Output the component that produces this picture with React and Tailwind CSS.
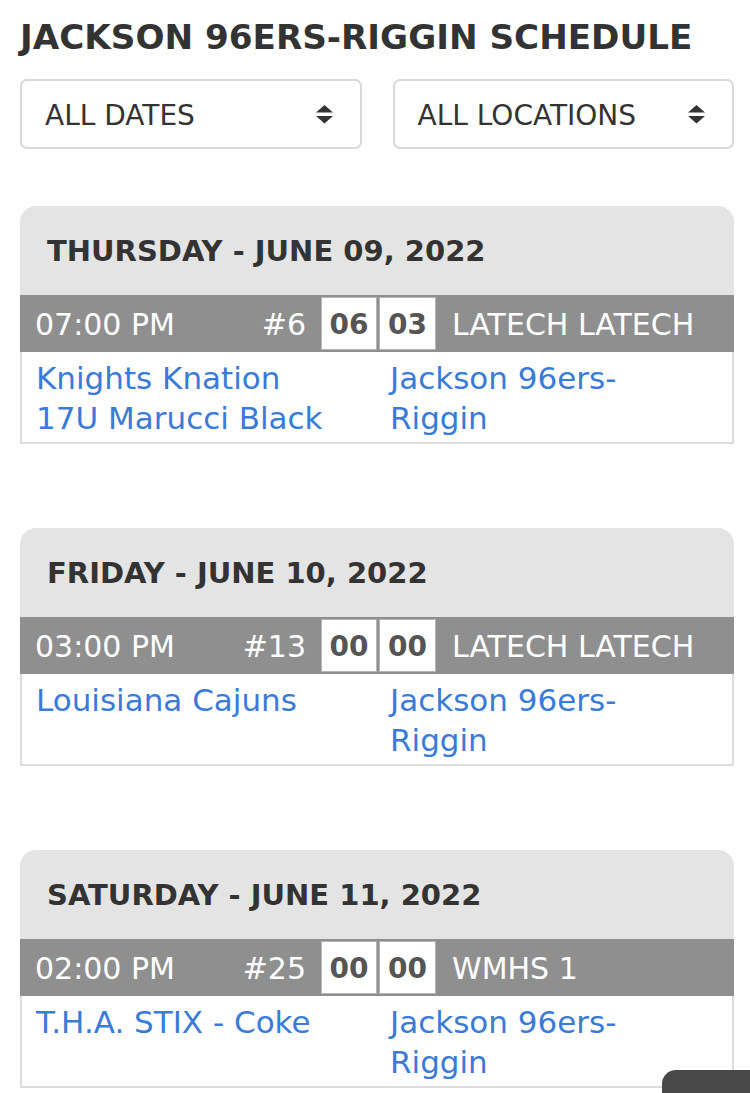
const games = [
  {
    date: 'THURSDAY - JUNE 09, 2022',
    time: '07:00 PM',
    num: '#6',
    home: '06',
    away: '03',
    location: 'LATECH LATECH',
    left: ['Knights Knation', '17U Marucci Black'],
    right: ['Jackson 96ers-', 'Riggin'],
  },
  {
    date: 'FRIDAY - JUNE 10, 2022',
    time: '03:00 PM',
    num: '#13',
    home: '00',
    away: '00',
    location: 'LATECH LATECH',
    left: ['Louisiana Cajuns'],
    right: ['Jackson 96ers-', 'Riggin'],
  },
  {
    date: 'SATURDAY - JUNE 11, 2022',
    time: '02:00 PM',
    num: '#25',
    home: '00',
    away: '00',
    location: 'WMHS 1',
    left: ['T.H.A. STIX - Coke'],
    right: ['Jackson 96ers-', 'Riggin'],
  },
];

const SortArrows = () => (
  <svg width="17" height="19" viewBox="0 0 17 19" className="shrink-0">
    <path d="M8.5 0 L17 7.5 L0 7.5 Z" fill="#333" />
    <path d="M0 11 L17 11 L8.5 18.5 Z" fill="#333" />
  </svg>
);

const Select = ({ label }) => (
  <div className="flex-1 h-[70px] border-2 border-[#d9d9d9] rounded-[7px] pl-[23px] pr-[27px] flex items-center justify-between">
    <span className="text-[28px] text-[#333] leading-none pt-[4px]">{label}</span>
    <SortArrows />
  </div>
);

const GameCard = ({ game }) => (
  <div>
    {/* date header */}
    <div className="h-[89px] bg-[#e4e4e4] rounded-t-[16px] pl-[27px] pt-[2px] flex items-center">
      <h2 className="text-[29px] font-bold text-[#333] leading-none">{game.date}</h2>
    </div>

    {/* time / score bar */}
    <div className="h-[57px] bg-[#8f8f8f] flex text-white text-[30px] leading-none">
      <div className="flex-1 pl-[15px] pt-[3px] flex items-center">{game.time}</div>
      <div className="pr-[15px] pt-[3px] flex items-center">{game.num}</div>
      <div className="w-[56px] my-[2px] pt-[2px] bg-white border border-[#b5b5b5] flex items-center justify-center text-[#555] font-bold text-[28px]">
        {game.home}
      </div>
      <div className="w-[2px]" />
      <div className="w-[57px] my-[2px] pt-[2px] bg-white border border-[#b5b5b5] flex items-center justify-center text-[#555] font-bold text-[28px]">
        {game.away}
      </div>
      <div className="w-[298px] pl-[16px] pt-[3px] flex items-center">{game.location}</div>
    </div>

    {/* teams */}
    <div className="h-[92px] border-x-2 border-b-2 border-[#dcdcdc] grid grid-cols-2 pt-[6px] text-[31px] leading-[40px] text-[#3a7bd8]">
      <div className="pl-[14px]">
        {game.left.map((l) => (
          <div key={l}>{l}</div>
        ))}
      </div>
      <div className="pl-[13px]">
        {game.right.map((l) => (
          <div key={l}>{l}</div>
        ))}
      </div>
    </div>
  </div>
);

export default function App() {
  return (
    <div className="min-h-screen bg-white font-['DejaVu_Sans',sans-serif]">
      <div className="pl-[20px] pr-[16px] pt-[15px]">
        <h1 className="text-[34.2px] font-bold text-[#333] leading-[44px]">JACKSON 96ERS-RIGGIN SCHEDULE</h1>

        <div className="mt-[20px] flex gap-[31px]">
          <Select label="ALL DATES" />
          <Select label="ALL LOCATIONS" />
        </div>

        <div className="mt-[57px] flex flex-col gap-[84px] pb-[40px]">
          {games.map((g) => (
            <GameCard key={g.date} game={g} />
          ))}
        </div>
      </div>

      {/* floating button peeking in the corner */}
      <div className="fixed right-0 bottom-0 w-[88px] h-[23px] rounded-tl-[14px] bg-[#484848]" />
    </div>
  );
}
